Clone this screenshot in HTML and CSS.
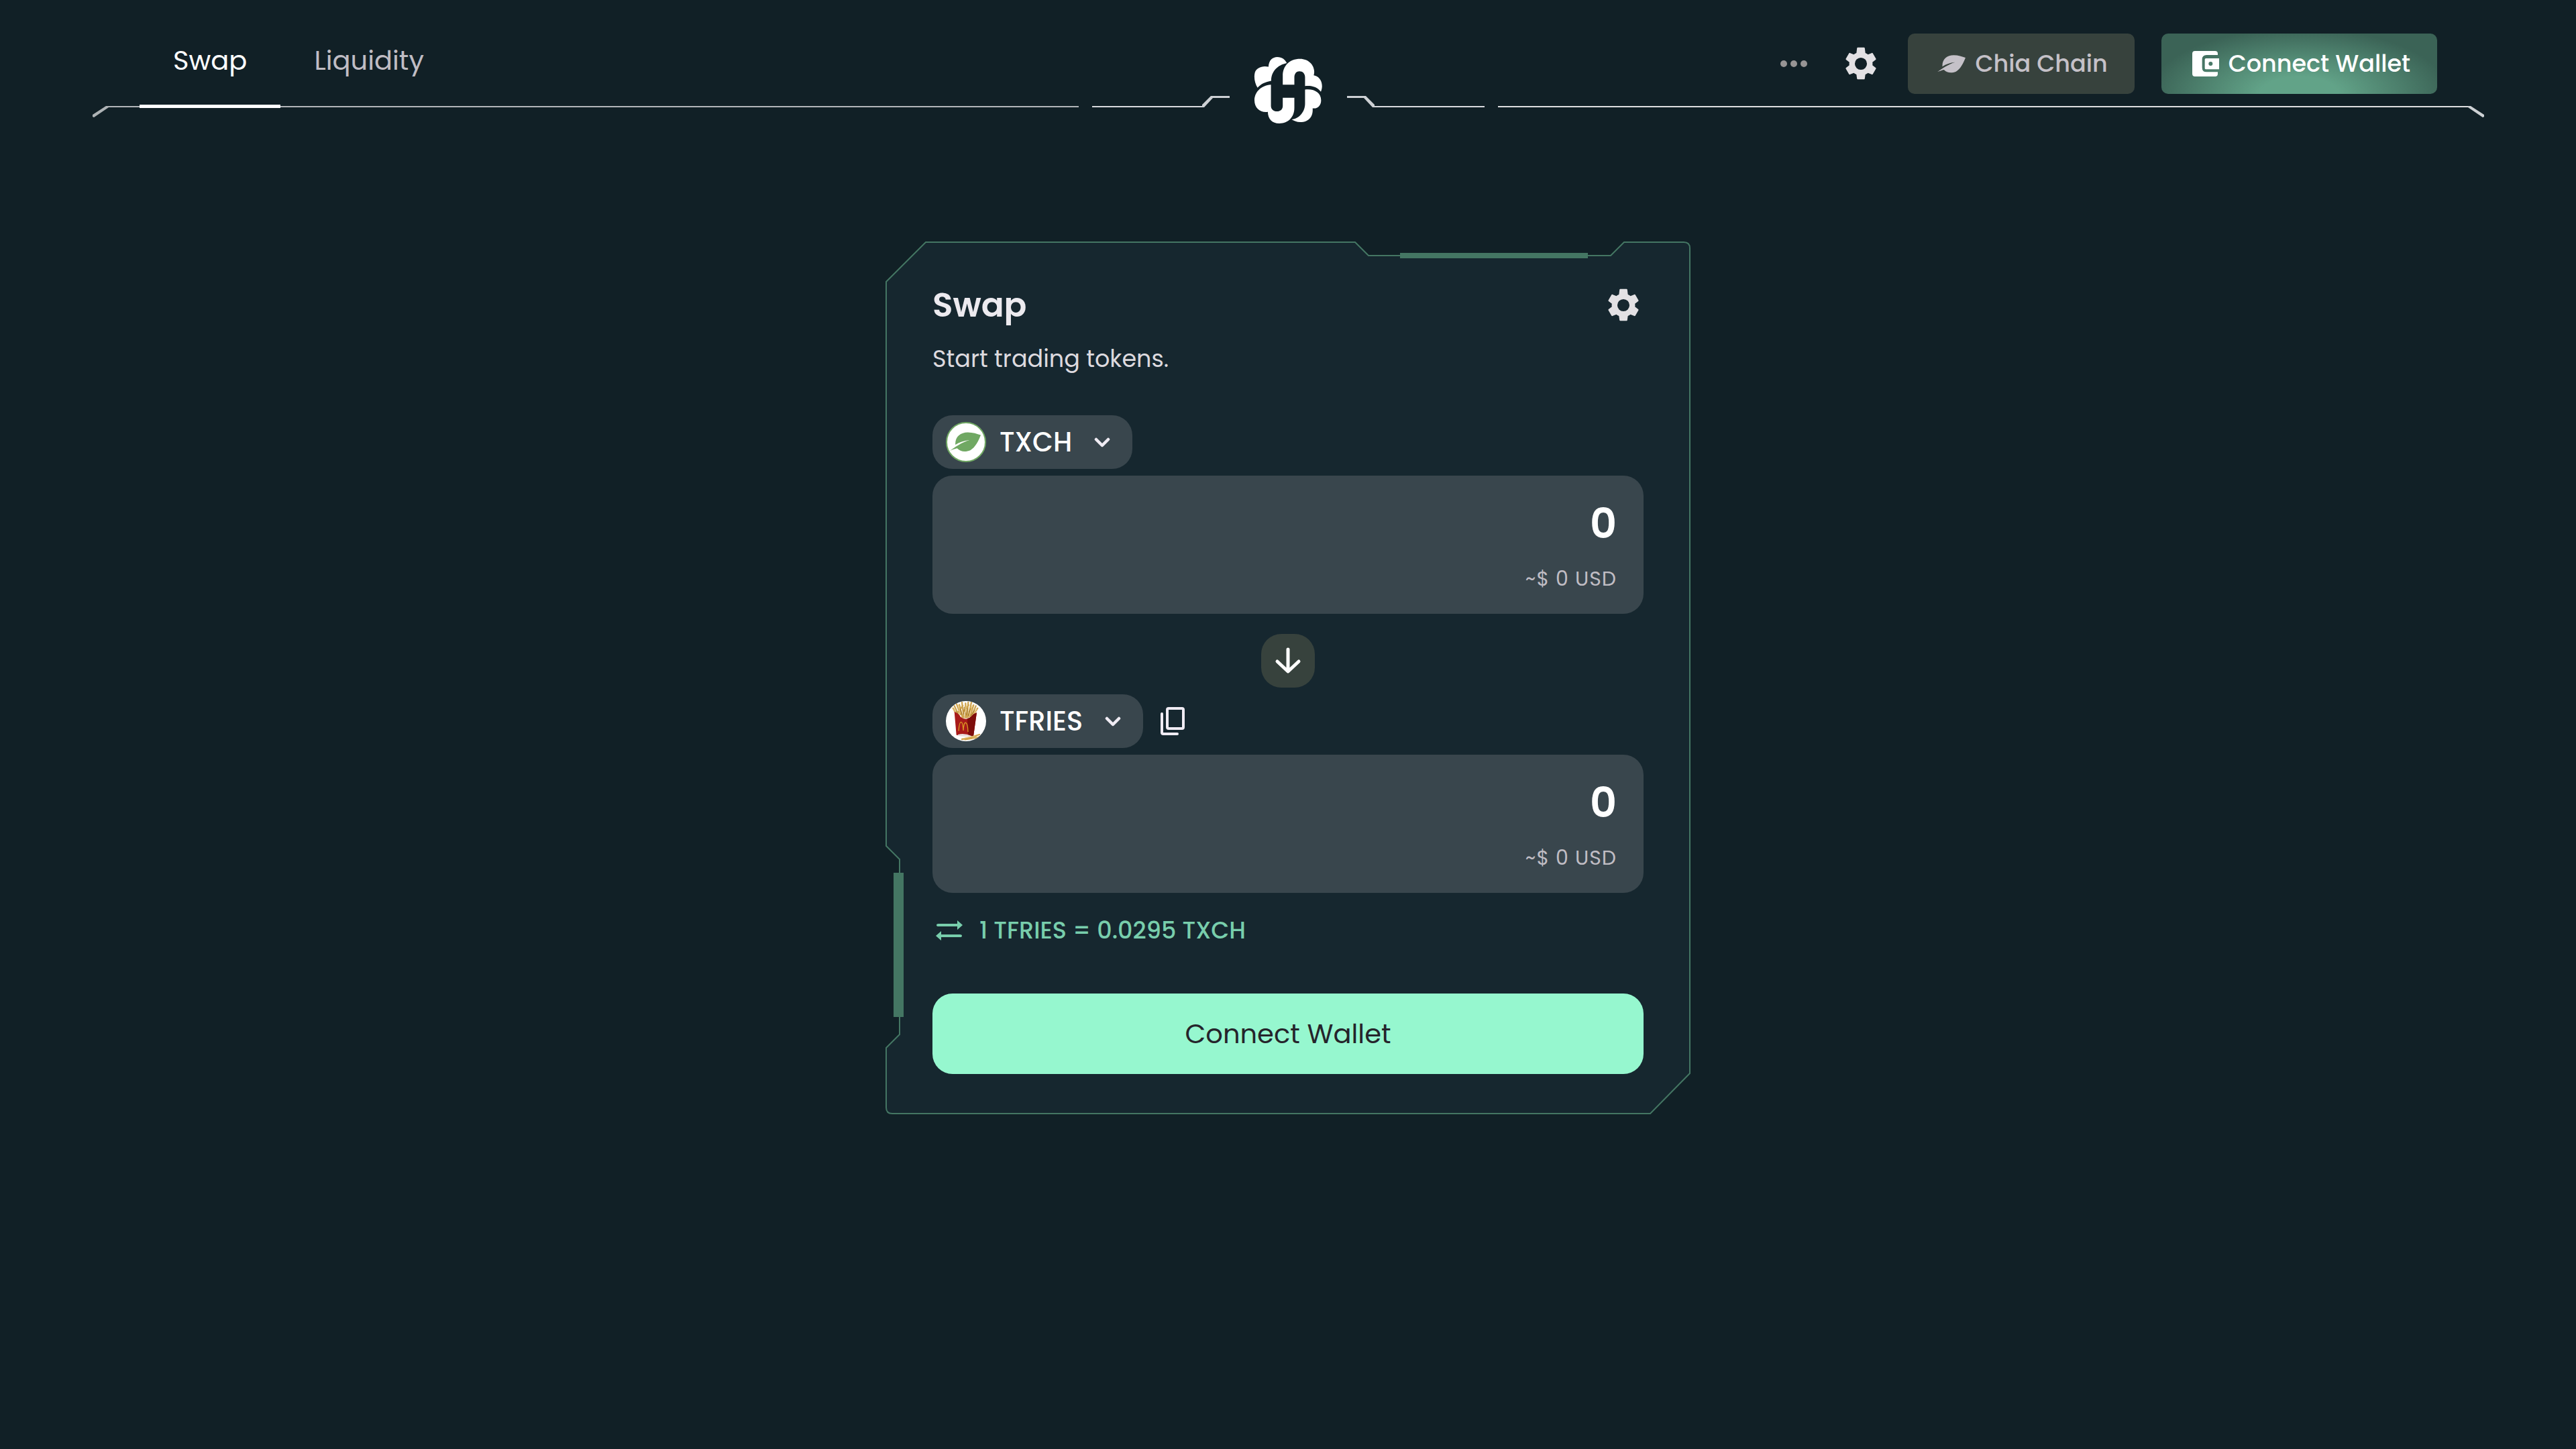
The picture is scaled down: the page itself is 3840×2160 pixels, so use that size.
FILE: index.html
```html
<!DOCTYPE html>
<html lang="en">
<head>
<meta charset="utf-8">
<meta name="viewport" content="width=device-width, initial-scale=1">
<title>Swap</title>
<link rel="stylesheet" href="styles.css">
</head>
<body>
<svg class="defs" aria-hidden="true">
  <symbol id="leaf" viewBox="743 113 124 80">
    <path d="M765 164C763 132 785 114 815 114C835 114 852 120 867 125C857 150 845 175 825 186C805 194 785 192 772 178C763 180 752 184 743 188C765 172 790 155 821 145C800 147 780 154 765 164Z"/>
  </symbol>
  <symbol id="gear" viewBox="0 0 24 24">
    <path d="M19.14 12.94c.04-.3.06-.61.06-.94 0-.32-.02-.64-.07-.94l2.03-1.58c.18-.14.23-.41.12-.61l-1.92-3.32c-.12-.22-.37-.29-.59-.22l-2.39.96c-.5-.38-1.03-.7-1.62-.94L14.4 2.41c-.04-.24-.24-.41-.48-.41h-3.84c-.24 0-.43.17-.47.41L9.25 5.350c-.59.24-1.13.57-1.62.94l-2.390-.96c-.22-.08-.47 0-.59.22L2.740 8.870c-.12.21-.08.47.12.61l2.030 1.580c-.05.3-.09.63-.09.94s.02.64.07.94l-2.030 1.580c-.18.14-.23.41-.12.61l1.920 3.320c.12.22.37.29.59.22l2.390-.96c.5.38 1.030.7 1.620.94l.36 2.540c.05.24.24.41.48.41h3.840c.24 0 .44-.17.47-.41l.36-2.540c.59-.24 1.130-.56 1.620-.94l2.390.96c.22.08.47 0 .59-.22l1.920-3.320c.12-.22.07-.47-.12-.61l-2.010-1.580zM12 15.750A3.750 3.750 0 1 1 12 8.250a3.750 3.750 0 0 1 0 7.500z"/>
  </symbol>
  <symbol id="chevron" viewBox="0 0 24 16">
    <path d="M3 4L12 13L21 4" fill="none" stroke="currentColor" stroke-width="4.500" stroke-linecap="round" stroke-linejoin="round"/>
  </symbol>
</svg>

<header class="header">
  <div class="rail" aria-hidden="true">
    <svg class="rail-end" viewBox="0 0 24 18"><path d="M24 1H20L0 14V17L2 18L24 3Z" fill="#aeb3b5"/></svg>
    <span class="rail-line rail-left"></span>
    <svg class="rail-step" viewBox="0 0 205 18"><path d="M0 15H166V17H0Z" fill="#d9dade"/><path d="M164 17V13L177 0H205V3H180L167 17Z" fill="#cdd0d4"/></svg>
    <svg class="rail-step" viewBox="0 0 205 18"><path d="M39 15H205V17H39Z" fill="#d9dade"/><path d="M41 17V13L28 0H0V3H25L38 17Z" fill="#cdd0d4"/></svg>
    <span class="rail-line rail-right"></span>
    <svg class="rail-end" viewBox="0 0 24 18"><path d="M0 1H4L24 14V17L22 18L0 3Z" fill="#ced1d4"/></svg>
  </div>
  <nav class="tabs">
    <a class="tab tab-active" href="#swap">Swap</a>
    <a class="tab" href="#liquidity">Liquidity</a>
  </nav>
  <a class="logo" href="#home" aria-label="Home">
    <svg viewBox="86 43 308 304" fill="#fff">
      <path d="M102 184C90 166 84 138 90 115C97 95 123 83 151 90C152 60 170 46 190 46C212 46 226 58 233 73C192 82 163 110 163 153C138 158 117 166 102 184Z"/>
      <path d="M162 170C116 173 88 205 88 240C88 275 115 297 148 292C148 325 170 345 200 344C240 344 267 315 267 275V229H215V265C215 281 204 290 189 290C173 290 162 280 162 265Z"/>
      <path d="M215 170V130C215 85 245 54 293 54C335 54 365 90 354 128C382 132 401 165 386 202C370 180 345 173 315 176V137C315 120 304 110 290 110C277 110 267 120 267 137V170Z"/>
      <path d="M315 192C355 187 387 205 387 240C387 265 370 280 349 276C352 310 335 338 293 338C278 338 265 333 255 326C290 323 315 290 315 255Z"/>
    </svg>
  </a>
  <div class="actions">
    <button class="icon-btn dots" type="button" aria-label="More">
      <svg viewBox="0 0 40 10"><circle cx="5" cy="5" r="5"/><circle cx="20" cy="5" r="5"/><circle cx="35" cy="5" r="5"/></svg>
    </button>
    <button class="icon-btn gear" type="button" aria-label="Settings"><svg><use href="#gear"/></svg></button>
    <button class="btn btn-chain" type="button"><svg class="leaf"><use href="#leaf"/></svg>Chia Chain</button>
    <button class="btn btn-wallet" type="button">
      <svg class="wallet" viewBox="201 96 120 114"><path fill-rule="evenodd" d="M213 96H303Q315 96 315 108V114H265Q245 114 245 134V170Q245 190 265 190H315V198Q315 210 303 210H213Q201 210 201 198V108Q201 96 213 96ZM262 129H321V178H262Q257 178 257 173V134Q257 129 262 129ZM283 144A9 9 0 1 0 283 162A9 9 0 1 0 283 144Z"/></svg>Connect Wallet</button>
  </div>
</header>

<main class="main">
  <section class="card" aria-labelledby="title">
    <svg class="frame" viewBox="0 0 1200 1301" preserveAspectRatio="none" aria-hidden="true">
      <path d="M60 1H700L720 21H1081L1101 1H1190Q1199 1 1199 10V1240L1140 1300H10Q1 1300 1 1291V1202L21 1182V921L1 901V60Z" fill="#16272f" stroke="#447663" stroke-width="2"/>
      <path d="M767 17H1047V25H767ZM12 941H27V1156H12Z" fill="#447663"/>
    </svg>
    <div class="card-head">
      <h1 class="title" id="title">Swap</h1>
      <button class="icon-btn gear" type="button" aria-label="Swap settings"><svg><use href="#gear"/></svg></button>
    </div>
    <p class="subtitle">Start trading tokens.</p>

    <div class="token-row">
      <button class="token" type="button">
        <svg class="coin" viewBox="0 0 60 60"><circle cx="30" cy="30" r="29" fill="#fff" stroke="#70a863" stroke-width="2"/><use href="#leaf" x="6" y="15" width="46" height="30" fill="#70a863"/></svg>
        TXCH
        <svg class="chevron"><use href="#chevron"/></svg>
      </button>
    </div>
    <div class="panel">
      <input class="amount" type="text" value="0" aria-label="TXCH amount">
      <span class="fiat">~$ 0 USD</span>
    </div>

    <button class="flip" type="button" aria-label="Reverse tokens">
      <svg viewBox="0 0 40 40" fill="none" stroke="#fff" stroke-width="5" stroke-linecap="round" stroke-linejoin="round"><path d="M20 3V35M4 21L20 36L36 21"/></svg>
    </button>

    <div class="token-row">
      <button class="token" type="button">
        <svg class="coin" viewBox="72 44 180 180">
          <clipPath id="round"><circle cx="162" cy="134" r="90"/></clipPath>
          <g clip-path="url(#round)">
            <path d="M72 44H252V224H72Z" fill="#fff"/>
            <g stroke="#d0a552" stroke-width="7" stroke-linecap="round">
              <path d="M122 108L104 76M132 112L110 66M138 104L120 58M146 118L132 60M152 118L144 50M160 118L160 54M166 118L172 50M172 116L186 50M180 114L196 62M188 110L206 66M196 104L214 76M126 96L148 64M150 92L174 62M176 92L190 74"/>
            </g>
            <path d="M118 90L132 112M136 78L144 106M154 70L152 104M168 76L164 108M182 78L172 110M200 84L184 110" stroke="#9c7024" stroke-width="3"/>
            <path d="M98 72L124 106M126 60L136 98M164 58L160 96M190 62L178 104M210 80L192 110" stroke="#efd084" stroke-width="3"/>
            <path d="M110 92Q128 98 138 115Q162 134 186 114Q194 102 210 96L195 202L119 196Z" fill="#a81a1a"/>
            <path d="M168 122Q180 120 188 110Q196 100 210 96L195 202L172 200Z" fill="#7d0d0b"/>
            <path d="M126 194Q155 186 188 201L187 206L126 200Z" fill="#e9dedd"/>
            <path d="M129 178Q132 138 140 138Q148 138 150 176Q152 138 161 141Q170 146 171 182" fill="none" stroke="#d99a22" stroke-width="4"/>
            <path d="M144 215L206 202M158 216L226 205M180 207L222 194" stroke="#d3a44c" stroke-width="7" stroke-linecap="round"/>
            <path d="M150 211L204 200M190 211L226 200" stroke="#f0d493" stroke-width="2"/>
          </g>
        </svg>
        TFRIES
        <svg class="chevron"><use href="#chevron"/></svg>
      </button>
      <button class="icon-btn copy" type="button" aria-label="Copy asset id">
        <svg viewBox="0 0 36 42" fill="none" stroke="#f0ecf4" stroke-width="4" stroke-linecap="round" stroke-linejoin="round"><rect x="10" y="2" width="24" height="30" rx="2"/><path d="M2 10V38Q2 40 4 40H25"/></svg>
      </button>
    </div>
    <div class="panel">
      <input class="amount" type="text" value="0" aria-label="TFRIES amount">
      <span class="fiat">~$ 0 USD</span>
    </div>

    <button class="rate" type="button">
      <svg viewBox="0 0 40 30" fill="#78ceac"><path d="M4 5H32V0L40 7L32 14V9H4Q1 9 1 7Q1 5 4 5ZM36 21H8V16L0 23L8 30V25H36Q39 25 39 23Q39 21 36 21Z"/></svg>
      1 TFRIES = 0.0295 TXCH
    </button>
    <button class="submit" type="button">Connect Wallet</button>
  </section>
</main>
</body>
</html>
```

FILE: styles.css
```css
* {
  box-sizing: border-box;
}

body {
  margin: 0;
  min-height: 100vh;
  background: #112026;
  color: #fff;
  font-family: Poppins, Inter, sans-serif;
  font-size: 40px;
  line-height: 60px;
}

svg {
  display: block;
  flex: none;
}

button {
  border: 0;
  padding: 0;
  background: none;
  color: inherit;
  font: inherit;
  white-space: nowrap;
  cursor: pointer;
}

.defs {
  display: none;
}

/* Header */
.header {
  position: relative;
  display: grid;
  grid-template-columns: 1fr auto 1fr;
  align-items: start;
  padding: 50px 207px 0 208px;
}

.rail {
  position: absolute;
  top: 143px;
  left: 138px;
  right: 137px;
  display: flex;
}

.rail-end {
  width: 24px;
  height: 18px;
  margin-top: 14px;
}

.rail-line {
  flex: 1;
  height: 2px;
  margin-top: 15px;
}

.rail-left {
  margin-right: 20px;
  background: #b2b5b9;
}

.rail-right {
  margin-left: 20px;
  background: #dedee0;
}

.rail-step {
  width: 205px;
  height: 18px;
}

.rail-step + .rail-step {
  margin-left: 175px;
}

.tabs {
  position: relative;
  display: flex;
}

.tab {
  padding: 10px 50px 36px;
  border-bottom: 5px solid transparent;
  color: #c0bdc4;
  text-decoration: none;
}

.tab-active {
  border-color: #fff;
  color: #fff;
}

.logo {
  position: relative;
  margin-top: 34px;
}

.logo svg {
  width: 103px;
  height: 101px;
}

.actions {
  position: relative;
  display: flex;
  align-items: center;
  justify-content: flex-end;
  gap: 40px;
}

.dots {
  margin-right: 10px;
}

.dots svg {
  width: 40px;
  height: 10px;
  fill: #979494;
}

.gear svg {
  width: 60px;
  height: 58px;
  fill: #e3e1e4;
}

.btn {
  display: flex;
  align-items: center;
  gap: 14px;
  height: 90px;
  padding: 0 40px 0 44px;
  border-radius: 10px;
  font-size: 35px;
  font-weight: 500;
}

.btn-chain {
  background: #37423d;
  color: #c5c1c8;
}

.btn-wallet {
  padding-left: 46px;
  background: radial-gradient(at 50% 100%, #62a388 20%, #3b6356 77%);
}

.leaf {
  width: 42px;
  height: 27px;
  fill: #c5c1c8;
}

.wallet {
  width: 40px;
  height: 38px;
  fill: #fff;
}

/* Card */
.main {
  padding: 175px 20px 80px;
}

.card {
  position: relative;
  display: flex;
  flex-direction: column;
  max-width: 1200px;
  margin: 0 auto;
  padding: 60px 70px;
}

.frame {
  position: absolute;
  inset: 0;
  z-index: -1;
  width: 100%;
  height: 100%;
}

.card-head {
  display: flex;
  align-items: center;
  justify-content: space-between;
  height: 70px;
}

.title {
  margin: 0;
  color: #eceaef;
  font-size: 50px;
  font-weight: 600;
}

.subtitle {
  margin: 15px 0 54px;
  color: #dddadf;
  font-size: 35px;
}

.token-row {
  display: flex;
  align-items: center;
  gap: 26px;
  margin-bottom: 10px;
}

.token {
  display: flex;
  align-items: center;
  gap: 20px;
  height: 80px;
  padding: 0 33px 0 20px;
  border-radius: 30px;
  background: #39464d;
  font-weight: 500;
}

.coin {
  width: 60px;
  height: 60px;
}

.chevron {
  width: 24px;
  height: 16px;
  margin-left: 13px;
  color: #f0ecf4;
}

.panel {
  display: flex;
  flex-direction: column;
  gap: 22px;
  padding: 32px 40px;
  border-radius: 30px;
  background: #39464d;
}

.amount {
  width: 100%;
  height: 80px;
  padding: 0;
  border: 0;
  outline: 0;
  background: none;
  color: #fff;
  font: 600 62px/80px Poppins, Inter, sans-serif;
  text-align: right;
}

.fiat {
  color: #c0bdc4;
  font-size: 30px;
  letter-spacing: 1px;
  line-height: 40px;
  text-align: right;
}

.flip {
  display: grid;
  place-items: center;
  align-self: center;
  width: 80px;
  height: 80px;
  margin: 30px 0 10px;
  border-radius: 30px;
  background: #37423d;
}

.flip svg {
  width: 40px;
  height: 40px;
}

.copy svg {
  width: 36px;
  height: 42px;
}

.rate {
  display: flex;
  align-items: center;
  align-self: flex-start;
  gap: 25px;
  margin: 26px 0 64px;
  padding-left: 5px;
  color: #78ceac;
  font-size: 35px;
  font-weight: 500;
}

.rate svg {
  width: 40px;
  height: 30px;
}

.submit {
  height: 120px;
  border-radius: 30px;
  background: #96f7cf;
  color: #25242b;
}
```
